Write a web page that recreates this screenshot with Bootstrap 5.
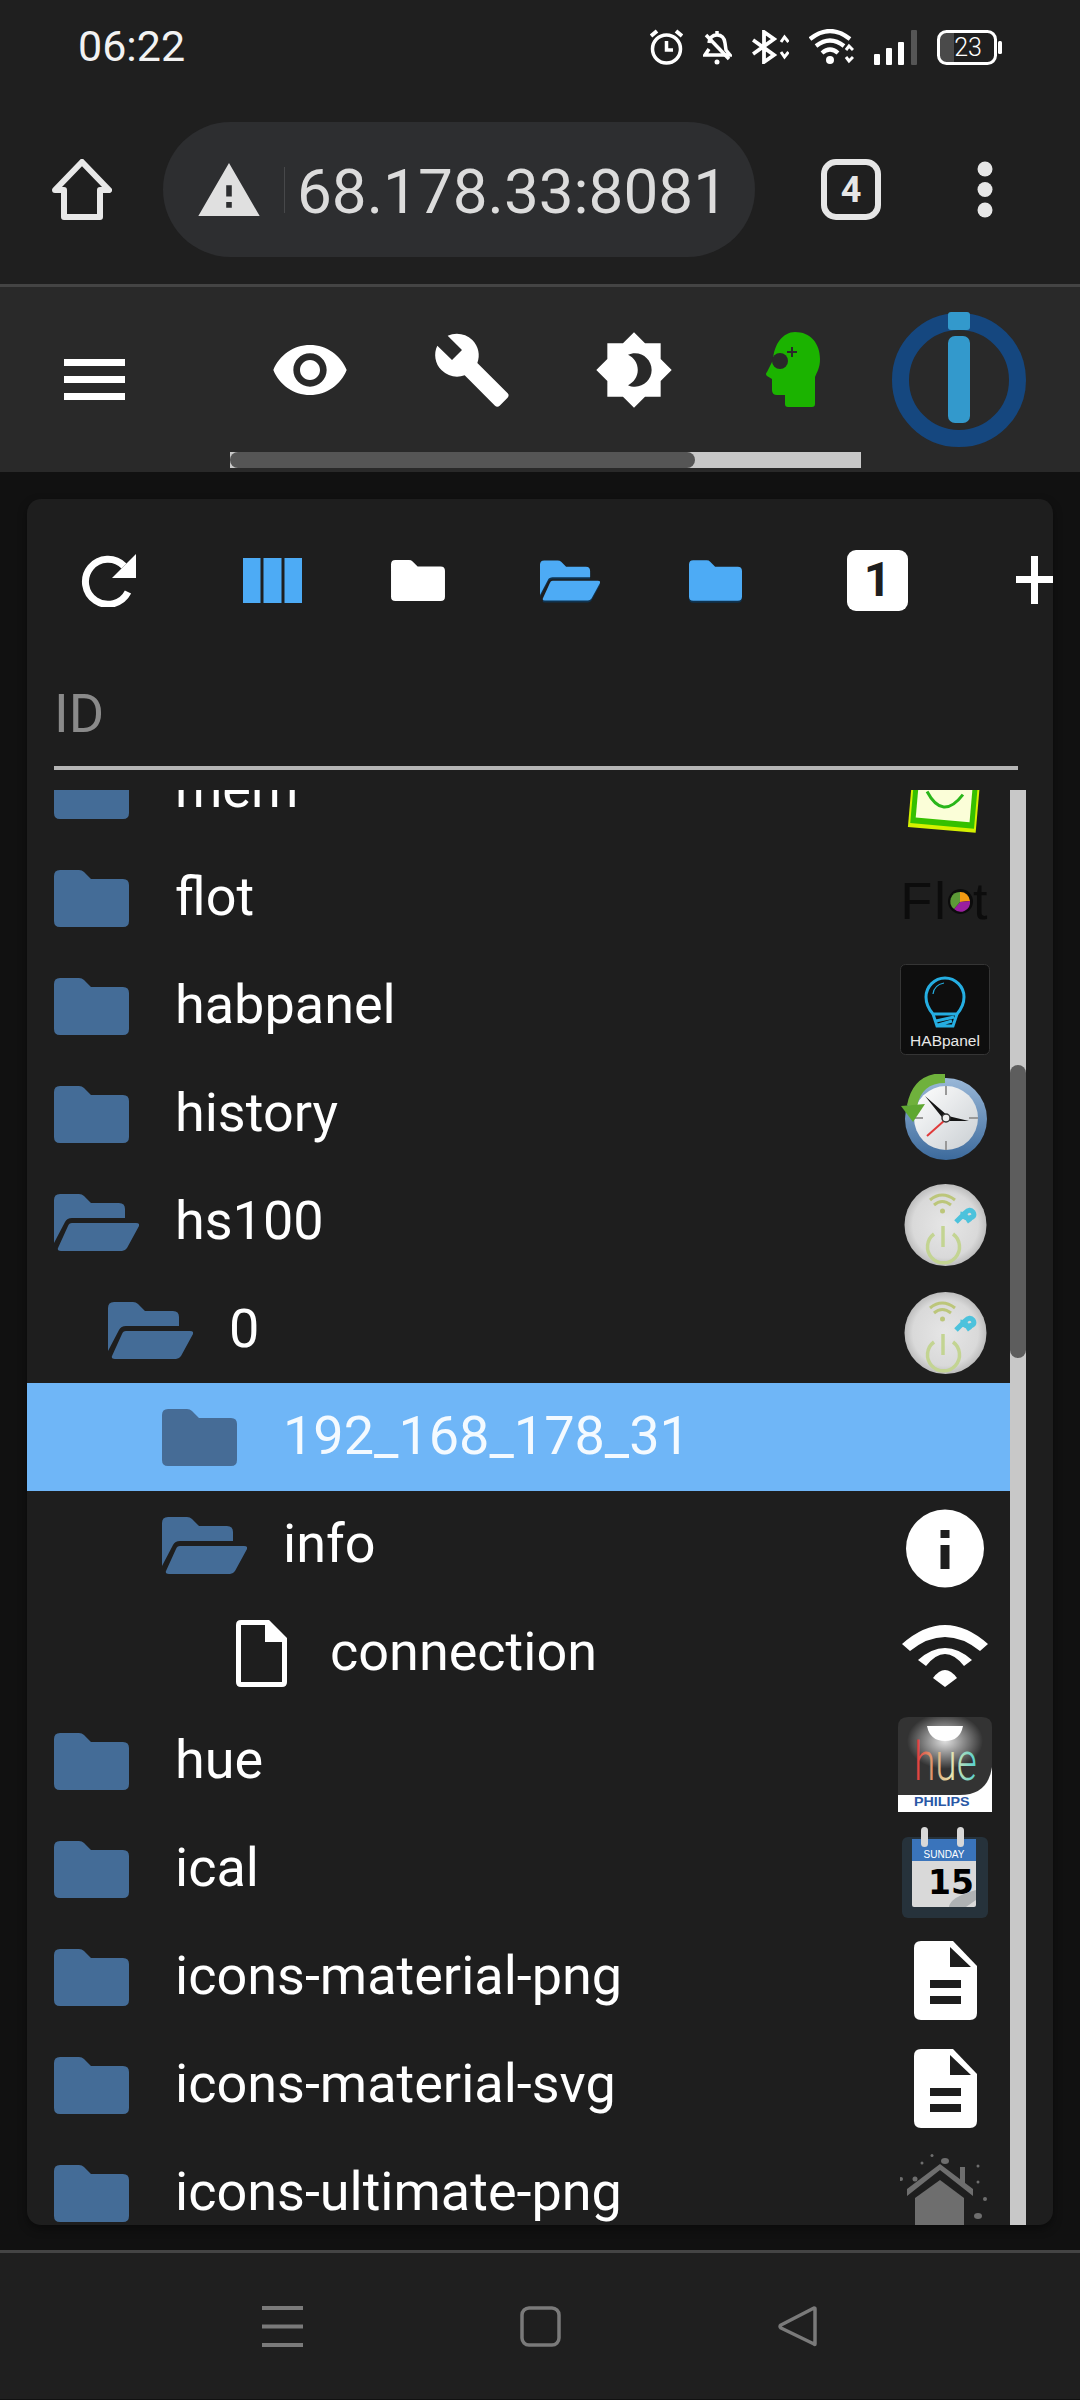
<!DOCTYPE html>
<html lang="en" data-bs-theme="dark">
<head>
<meta charset="utf-8">
<title>ioBroker</title>
<link href="https://cdn.jsdelivr.net/npm/bootstrap@5.3.0/dist/css/bootstrap.min.css" rel="stylesheet">
<script src="https://cdn.jsdelivr.net/npm/bootstrap@5.3.0/dist/js/bootstrap.bundle.min.js"></script>
<style>
html,body{margin:0;width:1080px;height:2400px;overflow:hidden;background:#111;font-family:Roboto,"Liberation Sans",sans-serif;color:#fff}
svg{display:block;flex:none}
.phone{width:1080px;height:2400px}
.chrome{background:#1f1f1f;border-bottom:3px solid #444}
.status{height:94px;padding:0 78px;gap:20px}
.time{font-size:43px;color:#f2f2f2;line-height:1;margin-top:-1px}
.urlrow{padding:28px 0 27px 52px}
.pill{width:592px;height:135px;margin-left:51px;padding-left:35px;background:#2d2e30;border-radius:68px}
.pill .sep{width:1px;height:46px;margin:0 12px 0 24px;background:#47484a}
.url{font-size:62px;line-height:1;color:#dcdcdc;white-space:nowrap;padding-top:5px;-webkit-mask-image:linear-gradient(90deg,#000 78%,#bbb 100%);mask-image:linear-gradient(90deg,#000 78%,#bbb 100%)}
.tabs{width:60px;height:61px;margin-left:66px;border:6px solid #e6e6e6;border-radius:15px;font-size:36px;font-weight:700;line-height:1;color:#e6e6e6;flex:none}
.kebab{margin-left:96px}
.appbar{background:#292929;padding:0;display:block}
.appicons{height:165px;padding-left:64px}
.burger{margin-top:19px}
.appicons .eye{margin-left:145px}
.appicons .wr{margin-left:82px}
.appicons .br{margin-left:82px}
.appicons .head{margin-left:92px}
.appicons .logo{margin-left:72px;margin-top:19px}
.hscroll{width:631px;height:16px;margin:0 0 4px 230px;background:#c8c8c8}
.hthumb{width:465px;height:16px;background:#555;border-radius:8px}
.content{padding:27px 27px 26px;height:1778px}
.panel{height:1726px;background:#1e1e1e;border:0;border-radius:14px;overflow:hidden;box-shadow:0 4px 10px rgba(0,0,0,.4)}
.toolbar{height:162px;padding-left:54px;overflow:hidden}
.tb-cols{margin-left:107px}
.tb-a{margin-left:89px}
.tb-b{margin-left:95px}
.tb-c{margin-left:89px}
.tb-d{margin-left:105px}
.tb-e{margin-left:108px}
.edge{filter:drop-shadow(0 2px 0 #0f3350)}
.onebox{width:61px;height:61px;flex:none;background:#fff;border-radius:9px;color:#1e1e1e;font-size:48px;font-weight:700;line-height:1}
.idfield{height:109px;margin:0 35px 20px 27px;border-bottom:4px solid #b5b5b5;font-size:54px;line-height:1;color:#8a8a8a;padding-top:26px}
.treewrap{height:1435px;padding-right:27px}
.treeclip{flex:1 1 auto;min-width:0;overflow:hidden}
.tree{margin-top:-54px;border-radius:0;background:transparent}
.tree .list-group-item{height:108px;padding:0;background:transparent;border:0;color:#fff;font-size:54px;line-height:1;white-space:nowrap}
.tree .list-group-item.active{background:#6fb6f7;color:#f4faff}
.tree .lbl{flex-grow:1;padding-bottom:2px}
.lv0{padding-left:27px !important}
.lv1{padding-left:81px !important}
.lv2{padding-left:135px !important}
.lv3{padding-left:209px !important}
.ico{width:121px}
.ico-file{width:94px}
.thumb-cell{width:130px;height:108px;padding-top:6px}
.vbar{width:16px;background:#c8c8c8;flex:none;padding-top:275px}
.vthumb{height:293px;background:#5d5d5d;border-radius:8px}
.flot{font-family:"Liberation Sans",sans-serif;font-size:52px;line-height:1;color:#0c0c0c;letter-spacing:2px}
.softkeys{height:149px;border-top:3px solid #444;background:#1f1f1f;padding-left:262px}
.softkeys .mid{margin-left:217px}
</style>
</head>
<body>
<svg width="0" height="0" style="position:absolute">
<defs>
<symbol id="folder" viewBox="0 0 75 57"><path d="M6 0H25Q28 0 30 2L37 9H69Q75 9 75 15V51Q75 57 69 57H6Q0 57 0 51V6Q0 0 6 0Z"/></symbol>
<symbol id="folder-open" viewBox="0 0 85 57"><path d="M6 0H25Q28 0 30 2L37 9H65Q71 9 71 15V24H18Q13 24 11 28L0 49V6Q0 0 6 0Z"/><path d="M18 29H82Q86 29 85 32L73 54Q71 57 68 57H7Q3 57 4 54L14 32Q15 29 18 29Z"/></symbol>
<symbol id="doc" viewBox="0 0 63 79"><path fill="#fff" d="M7 0H39L63 25V72Q63 79 56 79H7Q0 79 0 72V7Q0 0 7 0Z"/><path fill="#1e1e1e" d="M36 6L57 26H36ZM16 39H47V47H16ZM16 55H47V63H16Z"/></symbol>
<symbol id="tp" viewBox="0 0 85 82">
<circle cx="42.5" cy="41" r="41" fill="url(#tpg)"/>
<g fill="none" stroke="#bcc67a" stroke-width="3"><path d="M27 16Q39 6 52 16"/><path d="M31 21Q39 14 48 21"/></g><circle cx="39.500" cy="27" r="2.500" fill="#bcc67a"/>
<g fill="none" stroke="#c3d492" stroke-width="3.500"><path d="M31 50A16 16 0 1 0 50 50"/><path d="M40 42V63"/></g>
<path fill="none" stroke="#4cc2dc" stroke-width="5" d="M53 38L62 29Q67 24 70 28Q73 33 66 34Q59 34 60 28M62 31L67 38"/>
</symbol>
<radialGradient id="tpg"><stop offset="0" stop-color="#e6e6e6"/><stop offset=".8" stop-color="#d9d9d9"/><stop offset="1" stop-color="#bdbdbd"/></radialGradient>
<linearGradient id="hueg" x1="0" x2="1"><stop offset="0" stop-color="#e02a35"/><stop offset=".3" stop-color="#e0a070"/><stop offset=".6" stop-color="#e8e4b0"/><stop offset="1" stop-color="#4fd0d0"/></linearGradient>
<radialGradient id="glow"><stop offset="0" stop-color="#fff" stop-opacity=".85"/><stop offset="1" stop-color="#fff" stop-opacity="0"/></radialGradient>
<linearGradient id="ringg" x1="0" y1="0" x2="0" y2="1"><stop offset="0" stop-color="#9ab8d8"/><stop offset="1" stop-color="#3c6a9c"/></linearGradient>
<linearGradient id="faceg" x1="0" y1="0" x2="1" y2="1"><stop offset="0" stop-color="#fff"/><stop offset="1" stop-color="#c9ced2"/></linearGradient>
</defs>
</svg>

<div class="phone d-flex flex-column">
  <header class="chrome">
    <div class="status d-flex align-items-center">
      <span class="time me-auto">06:22</span>
      <svg width="33" height="36" viewBox="0 0 33 36" fill="none" stroke="#fff"><circle cx="16.500" cy="20" r="14" stroke-width="3.500"/><path d="M16.500 12V21H23" stroke-width="3.500"/><path d="M1 7L7 2M32 7L26 2" stroke-width="4"/></svg>
      <svg width="29" height="36" viewBox="0 0 29 36" fill="none" stroke="#fff" stroke-width="3.500"><path d="M14 2V6M6 14Q7 6 14 6Q21 6 22 14L23 21L27 26H2L6 20"/><path d="M3 6L26 30"/><circle cx="14" cy="33" r="2.500" fill="#fff" stroke="none"/></svg>
      <svg width="37" height="34" viewBox="0 0 37 34" fill="none" stroke="#fff" stroke-width="3.800"><path d="M1 10L22 25L12 32V2L22 9L1 24"/><path d="M29 12L32.500 7L36.500 12M29 22L32.500 27L36.500 22" stroke-width="3"/></svg>
      <svg width="45" height="36" viewBox="0 0 45 36" fill="none" stroke="#fff" stroke-width="4.200"><path d="M1 10Q21 -6 41 10"/><path d="M7 17Q21 6 35 17"/><path d="M13 24Q21 17 29 24"/><circle cx="21" cy="31" r="4" fill="#fff" stroke="none"/><path d="M37 21L40 17L44 21M37 28L40 32L44 28" stroke-width="3"/></svg>
      <svg width="43" height="35" viewBox="0 0 43 35"><rect x="0" y="24" width="6" height="11" rx="1" fill="#fff"/><rect x="12" y="18" width="6" height="17" rx="1" fill="#fff"/><rect x="24" y="12" width="6" height="23" rx="1" fill="#fff"/><rect x="37" y="0" width="6" height="35" rx="1" fill="#555"/></svg>
      <svg width="65" height="35" viewBox="0 0 65 35"><rect x="3" y="3" width="14" height="29" fill="#4a4a4a"/><rect x="1.500" y="1.500" width="57" height="32" rx="8" fill="none" stroke="#fff" stroke-width="3"/><rect x="61" y="11" width="4" height="13" rx="1.500" fill="#fff"/><text x="31" y="26" font-family="Roboto" font-size="25" font-weight="300" fill="#fff" text-anchor="middle">23</text></svg>
    </div>
    <div class="urlrow d-flex align-items-center">
      <svg width="60" height="61" viewBox="0 0 60 61" fill="none" stroke="#e8e8e8" stroke-width="6" stroke-linejoin="round"><path d="M30 3L57 31H48V58H12V31H3Z"/></svg>
      <div class="pill d-flex align-items-center">
        <svg width="62" height="53" viewBox="1 2 22 19" fill="#e0e0e0"><path d="M1 21h22L12 2 1 21zm12-3h-2v-2h2v2zm0-4h-2v-4h2v4z"/></svg>
        <span class="sep"></span>
        <span class="url">68.178.33:8081</span>
      </div>
      <div class="tabs d-flex align-items-center justify-content-center">4</div>
      <svg class="kebab" width="16" height="57" viewBox="0 0 16 57" fill="#e6e6e6"><circle cx="8" cy="8" r="7.500"/><circle cx="8" cy="28.500" r="7.500"/><circle cx="8" cy="49" r="7.500"/></svg>
    </div>
  </header>

  <nav class="navbar appbar">
    <div class="appicons d-flex align-items-center">
      <svg class="burger" width="61" height="41" viewBox="0 0 61 41" fill="#fff"><rect width="61" height="7"/><rect y="17" width="61" height="7"/><rect y="34" width="61" height="7"/></svg>
      <svg class="eye" width="80" height="80" viewBox="0 0 24 24" fill="#fff"><path d="M12 4.500C7 4.500 2.730 7.610 1 12c1.730 4.390 6 7.500 11 7.500s9.270-3.110 11-7.500c-1.730-4.390-6-7.500-11-7.500zM12 17c-2.760 0-5-2.240-5-5s2.240-5 5-5 5 2.240 5 5-2.240 5-5 5zm0-8c-1.660 0-3 1.340-3 3s1.340 3 3 3 3-1.340 3-3-1.340-3-3-3z"/></svg>
      <svg class="wr" width="80" height="80" viewBox="0 0 24 24" fill="#fff"><path d="M22.700 19l-9.100-9.100c.9-2.300.4-5-1.500-6.900-2-2-5-2.400-7.400-1.300L9 6 6 9 1.600 4.700C.4 7.100.9 10.100 2.900 12.100c1.900 1.900 4.600 2.400 6.900 1.500l9.100 9.100c.4.4 1 .4 1.400 0l2.300-2.300c.5-.4.5-1.100.1-1.400z"/></svg>
      <svg class="br" width="80" height="80" viewBox="0 0 24 24" fill="#fff" fill-rule="evenodd"><path d="M20 8.690V4h-4.690L12 .69 8.690 4H4v4.690L.69 12 4 15.310V20h4.690L12 23.310 15.310 20H20v-4.690L23.310 12 20 8.690zM12.290 7c-.74 0-1.450.17-2.080.46 1.720.79 2.920 2.530 2.920 4.540s-1.200 3.750-2.920 4.540c.63.29 1.340.46 2.080.46 2.760 0 5-2.240 5-5s-2.240-5-5-5z"/></svg>
      <svg class="head" width="54" height="75" viewBox="0 0 54 75"><path fill="#1bb300" d="M29 0C44 0 54 11 54 27C54 36 51 40 49 45V72Q49 75 46 75H22Q19 75 19 72V63H11Q6 63 6 58V47L1 44Q-1 42 1 40L7 28C8 12 17 0 29 0Z"/><circle cx="14" cy="29" r="8" fill="#292929"/><path fill="#292929" d="M25 15H27V19H31V21H27V25H25V21H21V19H25Z"/></svg>
      <svg class="logo" width="134" height="135" viewBox="0 0 134 135"><circle cx="67" cy="68" r="58.500" fill="none" stroke="#15477f" stroke-width="17"/><rect x="56" y="0" width="22" height="18" rx="3" fill="#3399cc"/><rect x="56" y="24" width="22" height="87" rx="7" fill="#3399cc"/></svg>
    </div>
    <div class="hscroll"><div class="hthumb"></div></div>
  </nav>

  <main class="content">
    <div class="card panel">
      <div class="toolbar d-flex align-items-center">
        <svg width="55" height="54" viewBox="0 0 55 54" fill="#fff"><path d="M43 13A22.500 22.500 0 1 0 47 39" fill="none" stroke="#fff" stroke-width="7"/><path d="M55 1V25H31Z"/></svg>
        <svg class="tb-cols" width="59" height="45" viewBox="0 0 59 45" fill="#4dabf5"><rect width="17.500" height="45"/><rect x="20.500" width="18" height="45"/><rect x="41.500" width="17.500" height="45"/></svg>
        <svg class="tb-a" width="54" height="41" fill="#fff"><use href="#folder"/></svg>
        <svg class="tb-b edge" width="60" height="41" fill="#4dabf5"><use href="#folder-open"/></svg>
        <svg class="tb-c edge" width="53" height="41" fill="#4dabf5"><use href="#folder"/></svg>
        <div class="tb-d onebox d-flex align-items-center justify-content-center">1</div>
        <svg class="tb-e" width="60" height="48" viewBox="0 0 60 48" fill="#fff"><rect x="0" y="20" width="38" height="7"/><rect x="15" y="0" width="7" height="48"/></svg>
      </div>
      <div class="idfield">ID</div>
      <div class="treewrap d-flex">
        <div class="treeclip">
          <div class="list-group tree">
            <div class="list-group-item d-flex align-items-center lv0"><span class="ico"><svg width="75" height="57" fill="#446c97"><use href="#folder"/></svg></span><span class="lbl">mem</span>
              <span class="thumb-cell d-flex align-items-center justify-content-center"><svg width="78" height="84" viewBox="0 0 78 84"><g transform="rotate(5 39 42)"><rect x="5" y="5" width="68" height="74" fill="#d4f000"/><rect x="7" y="5" width="64" height="70" fill="#35c000"/><rect x="12" y="9" width="54" height="60" fill="#fbfed8"/><path d="M21 42Q39 70 57 42" fill="none" stroke="#29b61a" stroke-width="3"/></g></svg></span></div>
            <div class="list-group-item d-flex align-items-center lv0"><span class="ico"><svg width="75" height="57" fill="#446c97"><use href="#folder"/></svg></span><span class="lbl">flot</span>
              <span class="thumb-cell d-flex align-items-center justify-content-center"><span class="flot d-flex align-items-center">Fl<svg width="25" height="25" viewBox="0 0 25 25"><circle cx="12.500" cy="12.500" r="12.500" fill="#0c0c0c"/><path d="M12 3A9.500 9.500 0 0 1 22 12L12 13Z" fill="#f39a12"/><path d="M22 12A9.500 9.500 0 0 1 6 20L12 13Z" fill="#9a1fa0"/><path d="M6 20A9.500 9.500 0 0 1 12 3V13Z" fill="#5d9a37"/></svg>t</span></span></div>
            <div class="list-group-item d-flex align-items-center lv0"><span class="ico"><svg width="75" height="57" fill="#446c97"><use href="#folder"/></svg></span><span class="lbl">habpanel</span>
              <span class="thumb-cell d-flex align-items-center justify-content-center"><svg width="90" height="91" viewBox="0 0 90 91"><rect x=".5" y=".5" width="89" height="90" rx="5" fill="#0e0e0e" stroke="#353535"/><g fill="none" stroke="#25aee2" stroke-width="3"><path d="M33 50Q26 42 26 33A19 19 0 0 1 64 33Q64 42 57 50Z"/><path d="M33 50L37 62H53L57 50M36 57L54 53M38 61L52 57"/><path d="M33 30Q34 21 44 19" stroke-width="1.200"/></g><text x="45" y="82" font-family="Liberation Sans" font-size="15.500" fill="#e8e8e8" text-anchor="middle">HABpanel</text></svg></span></div>
            <div class="list-group-item d-flex align-items-center lv0"><span class="ico"><svg width="75" height="57" fill="#446c97"><use href="#folder"/></svg></span><span class="lbl">history</span>
              <span class="thumb-cell d-flex align-items-center justify-content-center"><svg width="88" height="86" viewBox="0 0 88 86"><circle cx="45" cy="45" r="41" fill="url(#ringg)"/><circle cx="45" cy="44" r="32" fill="url(#faceg)"/><g fill="#999"><path d="M44 12h2v9h-2zM44 67h2v9h-2zM13 43h9v2h-9zM68 43h9v2h-9z"/></g><path d="M24 22L47 42L68 47L44 47Z" fill="#151515"/><path d="M26 62L44 46" stroke="#e03a3a" stroke-width="2"/><circle cx="45" cy="44" r="4" fill="#eee" stroke="#333" stroke-width="1.500"/><path d="M44 4Q16 4 11 32" fill="none" stroke="#6fb13c" stroke-width="10"/><path d="M0 32L24 30L12 48Z" fill="#5fa732"/></svg></span></div>
            <div class="list-group-item d-flex align-items-center lv0"><span class="ico"><svg width="85" height="57" fill="#446c97"><use href="#folder-open"/></svg></span><span class="lbl">hs100</span>
              <span class="thumb-cell d-flex align-items-center justify-content-center"><svg width="85" height="82"><use href="#tp"/></svg></span></div>
            <div class="list-group-item d-flex align-items-center lv1"><span class="ico"><svg width="85" height="57" fill="#446c97"><use href="#folder-open"/></svg></span><span class="lbl">0</span>
              <span class="thumb-cell d-flex align-items-center justify-content-center"><svg width="85" height="82"><use href="#tp"/></svg></span></div>
            <div class="list-group-item active d-flex align-items-center lv2"><span class="ico"><svg width="75" height="57" fill="#466c96"><use href="#folder"/></svg></span><span class="lbl">192_168_178_31</span></div>
            <div class="list-group-item d-flex align-items-center lv2"><span class="ico"><svg width="85" height="57" fill="#446c97"><use href="#folder-open"/></svg></span><span class="lbl">info</span>
              <span class="thumb-cell d-flex align-items-center justify-content-center"><svg width="78" height="79" viewBox="0 0 78 79"><circle cx="39" cy="39.500" r="39" fill="#fff"/><path fill="#1e1e1e" d="M34.500 21H43.500V29H34.500ZM34.500 36H43.500V60H34.500Z"/></svg></span></div>
            <div class="list-group-item d-flex align-items-center lv3"><span class="ico-file"><svg width="51" height="67" viewBox="0 0 51 67"><path d="M5 2.500H32L48.500 19V62Q48.500 64.500 46 64.500H5Q2.500 64.500 2.500 62V5Q2.500 2.500 5 2.500Z" fill="none" stroke="#fff" stroke-width="5"/><path d="M29 2V22H49Z" fill="#fff"/></svg></span><span class="lbl">connection</span>
              <span class="thumb-cell d-flex align-items-center justify-content-center"><svg width="86" height="62" viewBox="0 0 86 62" fill="#fff"><path d="M0 19Q43 -19 86 19L78 26Q43 -2 8 26Z"/><path d="M16 35Q43 11 70 35L62 41Q43 17 24 41Z"/><path d="M31 53Q43 37 55 53L43 62Z"/></svg></span></div>
            <div class="list-group-item d-flex align-items-center lv0"><span class="ico"><svg width="75" height="57" fill="#446c97"><use href="#folder"/></svg></span><span class="lbl">hue</span>
              <span class="thumb-cell d-flex align-items-center justify-content-center"><svg width="94" height="95" viewBox="0 0 94 95"><rect y="45" width="94" height="50" fill="#fff"/><path d="M10 0H84Q94 0 94 10V50Q90 78 62 78H0V10Q0 0 10 0Z" fill="#333"/><ellipse cx="47" cy="24" rx="38" ry="28" fill="url(#glow)"/><path d="M29 9H65Q62 24 47 24Q32 24 29 9Z" fill="#fff"/><text transform="translate(16 63) scale(.72 1)" font-family="Roboto" font-size="54" font-weight="300" fill="url(#hueg)">hue</text><text transform="translate(16 89) scale(1.1 1)" font-family="Liberation Sans" font-size="13" font-weight="700" fill="#2a58a5">PHILIPS</text></svg></span></div>
            <div class="list-group-item d-flex align-items-center lv0"><span class="ico"><svg width="75" height="57" fill="#446c97"><use href="#folder"/></svg></span><span class="lbl">ical</span>
              <span class="thumb-cell d-flex align-items-center justify-content-center"><svg width="86" height="91" viewBox="0 0 86 91"><rect y="10" width="86" height="81" rx="6" fill="#26323b"/><rect x="10" y="12" width="64" height="68" rx="2" fill="#d9d9d9"/><rect x="10" y="12" width="64" height="22" fill="#3a74bb"/><text x="42" y="31" font-family="Liberation Sans" font-size="10" fill="#fff" text-anchor="middle">SUNDAY</text><text x="26" y="67" font-family="DejaVu Sans" font-size="33" font-weight="700" fill="#000">15</text><path d="M74 63V73L64 80H47Q48 70 74 63Z" fill="#aeb1b3"/><rect x="19" y="0" width="7" height="20" rx="3.500" fill="#d8d8d8"/><rect x="55" y="0" width="7" height="20" rx="3.500" fill="#d8d8d8"/></svg></span></div>
            <div class="list-group-item d-flex align-items-center lv0"><span class="ico"><svg width="75" height="57" fill="#446c97"><use href="#folder"/></svg></span><span class="lbl">icons-material-png</span>
              <span class="thumb-cell d-flex align-items-center justify-content-center"><svg width="63" height="79"><use href="#doc"/></svg></span></div>
            <div class="list-group-item d-flex align-items-center lv0"><span class="ico"><svg width="75" height="57" fill="#446c97"><use href="#folder"/></svg></span><span class="lbl">icons-material-svg</span>
              <span class="thumb-cell d-flex align-items-center justify-content-center"><svg width="63" height="79"><use href="#doc"/></svg></span></div>
            <div class="list-group-item d-flex align-items-center lv0"><span class="ico"><svg width="75" height="57" fill="#446c97"><use href="#folder"/></svg></span><span class="lbl">icons-ultimate-png</span>
              <span class="thumb-cell d-flex align-items-center justify-content-center"><svg width="90" height="85" viewBox="0 0 90 85" fill="#6e6e6e"><path d="M7 42L40 16L73 42V35L40 10L7 35Z"/><path d="M15 44L40 26L64 44V85H15Z"/><rect x="60" y="13" width="5" height="18"/><ellipse cx="45" cy="7" rx="4" ry="3"/><circle cx="32" cy="1.500" r="1.500"/><circle cx="22" cy="9" r="1.500"/><circle cx="1" cy="25" r="2"/><circle cx="15" cy="25" r="2.500"/><circle cx="78" cy="12" r="1.500"/><circle cx="78" cy="28" r="1.500"/><circle cx="85" cy="45" r="2"/><ellipse cx="78" cy="62" rx="4" ry="3"/></svg></span></div>
          </div>
        </div>
        <div class="vbar"><div class="vthumb"></div></div>
      </div>
    </div>
  </main>

  <footer class="softkeys d-flex align-items-center">
    <svg width="41" height="41" viewBox="0 0 41 41" fill="#7a7a7a"><rect width="41" height="4"/><rect y="18.500" width="41" height="4"/><rect y="37" width="41" height="4"/></svg>
    <svg class="mid" width="41" height="41" viewBox="0 0 41 41" fill="none" stroke="#7a7a7a" stroke-width="3.500"><rect x="2" y="2" width="37" height="37" rx="7"/></svg>
    <svg class="mid" width="40" height="41" viewBox="0 0 40 41" fill="none" stroke="#7a7a7a" stroke-width="3.500" stroke-linejoin="round"><path d="M37 3V38Q37 39 36 38L3 22Q1 20.500 3 19L36 2Q37 2 37 3Z"/></svg>
  </footer>
</div>
</body>
</html>
